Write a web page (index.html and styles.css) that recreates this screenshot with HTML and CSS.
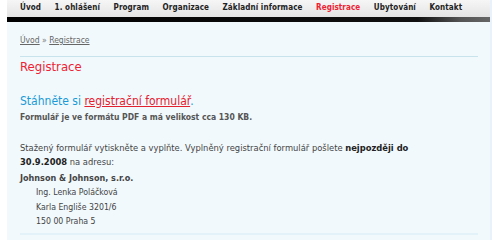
FILE: index.html
```html
<!DOCTYPE html>
<html lang="cs">
  <head>
    <meta charset="UTF-8" />
    <title>Registrace</title>
    <link rel="stylesheet" href="styles.css">
  </head>
  <body>
    <div class="page">
      <ul class="menu">
        <li><a href="#">Úvod</a></li>
        <li><a href="#">1. ohlášení</a></li>
        <li><a href="#">Program</a></li>
        <li><a href="#">Organizace</a></li>
        <li><a href="#">Základní informace</a></li>
        <li><a href="#" class="active">Registrace</a></li>
        <li><a href="#">Ubytování</a></li>
        <li><a href="#">Kontakt</a></li>
      </ul>
      <div class="menu-bar"></div>
      <div class="content">
        <div class="crumbs"><a href="#">Úvod</a> &raquo; <a href="#">Registrace</a></div>
        <h1>Registrace</h1>
        <p class="download">Stáhněte si <a href="#">registrační formulář</a>.</p>
        <p class="note">Formulář je ve formátu PDF a má velikost cca 130 KB.</p>
        <p class="text">Stažený formulář vytiskněte a vyplňte. Vyplněný registrační formulář pošlete <strong>nejpozději do</strong><br><strong>30.9.2008</strong> na adresu:</p>
        <p class="company">Johnson &amp; Johnson, s.r.o.</p>
        <p class="address">Ing. Lenka Poláčková<br>Karla Engliše 3201/6<br>150 00 Praha 5</p>
        <div class="rule"></div>
      </div>
    </div>
  </body>
</html>
```

FILE: styles.css
```css
* {
  margin: 0;
  padding: 0;
  box-sizing: border-box;
}
body {
  background-color: #fff;
  font-family: "DejaVu Sans Condensed", "DejaVu Sans", Verdana, sans-serif;
  font-stretch: condensed;
  color: #444;
}
.page {
  margin: 0 8px 0 7px;
  background-color: #f1f9fc;
  border-right: 2px solid #e8f2fb;
  min-height: 240px;
}
.menu {
  list-style: none;
  display: flex;
  height: 17px;
  padding-left: 13px;
  background: linear-gradient(to bottom, #f6f6f6, #e4e4e4);
  white-space: nowrap;
}
.menu a {
  display: block;
  font-size: 8px;
  font-weight: bold;
  color: #222;
  text-decoration: none;
  padding-top: 3px;
  margin-right: 13.5px;
  letter-spacing: 0.1px;
}
.menu a.active {
  color: #ee2233;
}
.menu-bar {
  height: 5px;
  background: linear-gradient(to right, #000 0%, #111 85%, #555 94%, #666 100%);
}
.content {
  padding: 13px 12px 0 13px;
}
.crumbs {
  font-size: 8.5px;
  color: #777;
  padding-bottom: 11px;
  border-bottom: 1px solid #c8e3ec;
}
.crumbs a {
  color: #666;
}
h1 {
  font-size: 13px;
  font-weight: normal;
  color: #ee2233;
  margin: 2px 0 20px;
}
.download {
  font-size: 12px;
  color: #1a9ad6;
}
.download a {
  color: #e4202f;
}
.note {
  font-size: 8.5px;
  font-weight: bold;
  color: #555;
  margin-top: 4px;
}
.text {
  font-size: 9.3px;
  line-height: 14px;
  margin-top: 19px;
}
.text strong {
  color: #222;
}
.company {
  font-size: 9px;
  font-weight: bold;
  margin-top: 4px;
}
.address {
  font-size: 8.7px;
  line-height: 14.5px;
  margin: 2px 0 0 16px;
}
.rule {
  border-top: 2px solid #e3f1f8;
  margin-top: 4px;
}
```
